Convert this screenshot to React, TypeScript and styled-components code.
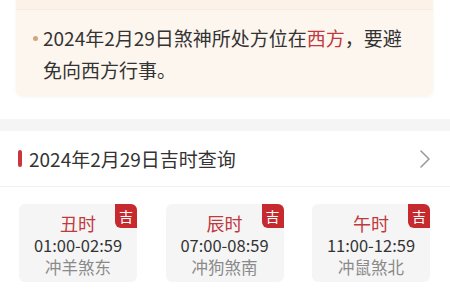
import React from 'react';
import styled, { createGlobalStyle } from 'styled-components';

const GlobalStyle = createGlobalStyle`
  html, body {
    margin: 0;
    padding: 0;
    background: #ffffff;
  }
  body {
    font-family: "Noto Sans CJK SC", "Noto Sans", sans-serif;
    color: #333;
  }
`;

const Page = styled.div`
  width: 450px;
  height: 300px;
  overflow: hidden;
  background: #fff;
`;

/* tips card cut off by the top of the screen */
const TipCard = styled.div`
  margin: 0 17px 0 16px;
  background: #fdf6ee;
  border-radius: 0 0 7px 7px;
  box-shadow: 0 1px 3px rgba(200, 180, 150, 0.15);
`;

const TipHead = styled.div`
  height: 9px;
  background: #fcf3e8;
  border-bottom: 1px solid #f6ece0;
`;

const TipBody = styled.div`
  padding: 12px 16px 10px 10px;
`;

const TipLine = styled.div`
  position: relative;
  padding-left: 17px;
  font-size: 19px;
  line-height: 32px;
  color: #333;
`;

const Dot = styled.span`
  position: absolute;
  left: 7px;
  top: 14px;
  width: 5px;
  height: 5px;
  border-radius: 50%;
  background: #d2a67c;
`;

const Highlight = styled.span`
  color: #c0393f;
`;

const Spacer = styled.div`
  height: 23px;
`;

const GrayBand = styled.div`
  height: 12px;
  background: #f5f5f5;
`;

const Section = styled.div`
  background: #fff;
`;

const SectionHead = styled.div`
  height: 55px;
  display: flex;
  align-items: center;
  padding: 0 19px 0 18px;
  border-bottom: 1px solid #f0f0f0;
`;

const Bar = styled.span`
  width: 4px;
  height: 17px;
  border-radius: 2px;
  background: #c9363e;
  margin-right: 7px;
`;

const SectionTitle = styled.span`
  flex: 1;
  font-size: 19px;
  color: #333;
  line-height: 24px;
`;

const HourGrid = styled.div`
  display: flex;
  justify-content: space-between;
  padding: 17px 20px 0 19px;
`;

const HourCard = styled.div`
  position: relative;
  width: 118px;
  height: 78px;
  box-sizing: border-box;
  padding-top: 8px;
  border-radius: 6px;
  background: #f5f5f5;
  text-align: center;
`;

const HourName = styled.div`
  font-size: 18px;
  line-height: 22px;
  color: #c0393f;
`;

const HourTime = styled.div`
  font-size: 16.5px;
  line-height: 22px;
  color: #333;
`;

const HourDesc = styled.div`
  font-size: 16.5px;
  line-height: 22px;
  color: #8a8a8a;
`;

const Badge = styled.span`
  position: absolute;
  top: 0;
  right: 0;
  width: 22px;
  height: 24px;
  border-radius: 0 6px 0 6px;
  background: #c62a2f;
  color: #fff;
  font-size: 14px;
  line-height: 24px;
  text-align: center;
`;

const Chevron = () => (
  <svg width="12" height="20" viewBox="0 0 12 20">
    <path d="M2 2 L10 10 L2 18" fill="none" stroke="#9a9a9a" strokeWidth="1.6" strokeLinecap="round" strokeLinejoin="round" />
  </svg>
);

const hours = [
  { name: '丑时', time: '01:00-02:59', desc: '冲羊煞东' },
  { name: '辰时', time: '07:00-08:59', desc: '冲狗煞南' },
  { name: '午时', time: '11:00-12:59', desc: '冲鼠煞北' },
];

export default function App() {
  return (
    <Page>
      <GlobalStyle />
      <TipCard>
        <TipHead />
        <TipBody>
          <TipLine>
            <Dot />
            2024年2月29日煞神所处方位在<Highlight>西方</Highlight>，要避免向西方行事。
          </TipLine>
        </TipBody>
      </TipCard>
      <Spacer />
      <GrayBand />
      <Section>
        <SectionHead>
          <Bar />
          <SectionTitle>2024年2月29日吉时查询</SectionTitle>
          <Chevron />
        </SectionHead>
        <HourGrid>
          {hours.map((h) => (
            <HourCard key={h.name}>
              <Badge>吉</Badge>
              <HourName>{h.name}</HourName>
              <HourTime>{h.time}</HourTime>
              <HourDesc>{h.desc}</HourDesc>
            </HourCard>
          ))}
        </HourGrid>
      </Section>
    </Page>
  );
}
